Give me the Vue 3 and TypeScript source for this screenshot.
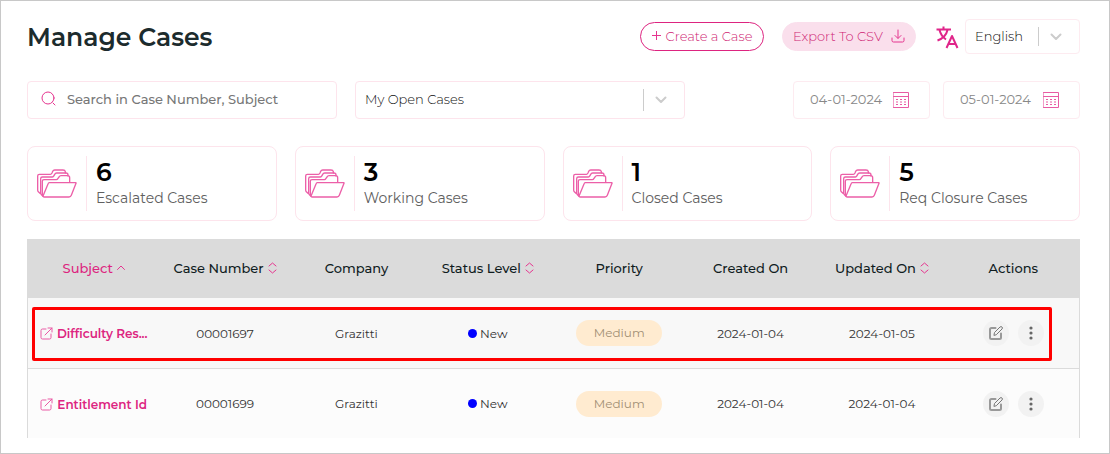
<script setup lang="ts">
import { ref } from 'vue'

interface Column { label: string; sort?: 'asc' | 'both' }
interface CaseRow {
  subject: string
  number: string
  company: string
  status: string
  priority: string
  created: string
  updated: string
  selected?: boolean
}

const search = ref('')
const view = ref('My Open Cases')
const language = ref('English')
const fromDate = ref('04-01-2024')
const toDate = ref('05-01-2024')

const stats = [
  { count: 6, label: 'Escalated Cases' },
  { count: 3, label: 'Working Cases' },
  { count: 1, label: 'Closed Cases' },
  { count: 5, label: 'Req Closure Cases' },
]

const columns: Column[] = [
  { label: 'Subject', sort: 'asc' },
  { label: 'Case Number', sort: 'both' },
  { label: 'Company' },
  { label: 'Status Level', sort: 'both' },
  { label: 'Priority' },
  { label: 'Created On' },
  { label: 'Updated On', sort: 'both' },
  { label: 'Actions' },
]

const rows: CaseRow[] = [
  { subject: 'Difficulty Res...', number: '00001697', company: 'Grazitti', status: 'New', priority: 'Medium', created: '2024-01-04', updated: '2024-01-05', selected: true },
  { subject: 'Entitlement Id', number: '00001699', company: 'Grazitti', status: 'New', priority: 'Medium', created: '2024-01-04', updated: '2024-01-04' },
]
</script>

<template>
  <main class="page">
    <header class="top">
      <h1>Manage Cases</h1>
      <button type="button" class="pill create">
        <svg width="9" height="9" viewBox="0 0 9 9" aria-hidden="true"><path d="M4.500 0v9M0 4.500h9" /></svg>
        Create a Case
      </button>
      <button type="button" class="pill export">
        Export To CSV
        <svg width="14" height="14" viewBox="0 0 14 14" aria-hidden="true"><path d="M7 1v8M4 6.500l3 3 3-3M1 9v2.500q0 1.500 1.500 1.500h9q1.500 0 1.500-1.500V9" /></svg>
      </button>
      <div class="language">
        <svg class="translate" width="24" height="24" viewBox="0 0 24 24" aria-hidden="true">
          <path d="M1.500 4.500H16M8.500 1.500v3M4.500 5c1 4 3.500 7.500 6.500 9.500M12.500 5c-1 4.500-4.500 8.500-10 10.500M11.500 23 17 11l5.500 12M13.500 19h7" />
        </svg>
        <div class="select">
          <select v-model="language" aria-label="Language"><option>English</option></select>
          <span class="caret"><svg width="12" height="8" viewBox="0 0 12 8" aria-hidden="true"><path d="M1.500 1.500 6 6l4.500-4.500" /></svg></span>
        </div>
      </div>
    </header>

    <section class="filters">
      <label class="search">
        <svg width="16" height="16" viewBox="0 0 16 16" aria-hidden="true"><circle cx="8" cy="7" r="6" /><path d="m13 12 2 2" /></svg>
        <input v-model="search" type="text" placeholder="Search in Case Number, Subject" aria-label="Search cases">
      </label>
      <div class="select view">
        <select v-model="view" aria-label="Case view"><option>My Open Cases</option></select>
        <span class="caret"><svg width="12" height="8" viewBox="0 0 12 8" aria-hidden="true"><path d="M1.500 1.500 6 6l4.500-4.500" /></svg></span>
      </div>
      <div class="dates">
        <label class="date">
          <input v-model="fromDate" type="text" aria-label="From date">
          <svg width="16" height="16" viewBox="0 0 16 16" aria-hidden="true"><path d="M.5.5h15v15H.5zM.5 4.500h15" /><path class="dots" d="M3 7.500h10M3 10h10M3 12.500h10" /></svg>
        </label>
        <label class="date">
          <input v-model="toDate" type="text" aria-label="To date">
          <svg width="16" height="16" viewBox="0 0 16 16" aria-hidden="true"><path d="M.5.5h15v15H.5zM.5 4.500h15" /><path class="dots" d="M3 7.500h10M3 10h10M3 12.500h10" /></svg>
        </label>
      </div>
    </section>

    <section class="stats">
      <article v-for="s in stats" :key="s.label" class="stat">
        <div class="folder">
          <svg width="40" height="29" viewBox="0 0 120 87" aria-hidden="true">
            <path d="M9 73 4 68q-2-2-2-5V21q0-5 5-5h33q3 0 5-4l2-5q2-4 6-4h25q6 0 7 5v4" />
            <path d="M14 78 11 74V29q0-5 5-5h30q3 0 5-4l2-4q2-4 6-4h28q6 0 6 6v3" />
            <path d="M18 82q-2 0-2-5V37q0-5 5-5h37q3 0 5-4l3-4q2-4 6-4h20q6 0 6 6v14" />
            <path d="M37 41h79q2 0 1 2l-14 36q-2 5-7 5H22q-5 0-3-5l14-34q1-4 4-4Z" />
          </svg>
        </div>
        <div>
          <strong>{{ s.count }}</strong>
          <p>{{ s.label }}</p>
        </div>
      </article>
    </section>

    <div class="table-wrap">
      <table>
        <thead>
          <tr>
            <th v-for="c in columns" :key="c.label" scope="col" :class="{ active: c.sort === 'asc' }">
              <button v-if="c.sort" type="button" class="sort">
                {{ c.label }}
                <svg v-if="c.sort === 'asc'" width="8" height="5" viewBox="0 0 8 5" aria-hidden="true"><path d="M.5 4.500 4 1l3.500 3.500" /></svg>
                <svg v-else width="9" height="12" viewBox="0 0 9 12" aria-hidden="true"><path d="M1 4 4.500 1 8 4M1 8l3.500 3L8 8" /></svg>
              </button>
              <template v-else>{{ c.label }}</template>
            </th>
          </tr>
        </thead>
        <tbody>
          <tr v-for="r in rows" :key="r.number" :class="{ selected: r.selected }">
            <td>
              <a href="#" class="subject">
                <svg width="13" height="13" viewBox="0 0 13 13" aria-hidden="true"><path d="M6 2H2.500Q1 2 1 3.500v7Q1 12 2.500 12h7q1.500 0 1.500-1.500V7M8 1h4v4M12 1 5 8" /></svg>
                {{ r.subject }}
              </a>
              <span v-if="r.selected" class="outline"></span>
            </td>
            <td>{{ r.number }}</td>
            <td>{{ r.company }}</td>
            <td><span class="status">{{ r.status }}</span></td>
            <td><span class="priority">{{ r.priority }}</span></td>
            <td>{{ r.created }}</td>
            <td>{{ r.updated }}</td>
            <td>
              <div class="actions">
                <button type="button" aria-label="Edit case">
                  <svg class="edit" width="14" height="14" viewBox="0 0 14 14" aria-hidden="true"><path d="M6.500 2H2.500Q1 2 1 3.500v8Q1 13 2.500 13h8q1.500 0 1.500-1.500v-4" /><path class="pen" d="m5 9 .5-2.500L11 1q1-.8 2 0t0 2L7.500 8.500Z" /></svg>
                </button>
                <button type="button" aria-label="More actions">
                  <svg class="more" width="4" height="14" viewBox="0 0 4 14" aria-hidden="true"><circle cx="2" cy="2" r="1.600" /><circle cx="2" cy="7" r="1.600" /><circle cx="2" cy="12" r="1.600" /></svg>
                </button>
              </div>
            </td>
          </tr>
        </tbody>
      </table>
    </div>
  </main>
</template>

<style>
body { margin: 0; background: #fff; }
</style>

<style scoped>
* { box-sizing: border-box; }
.page {
  min-height: 100vh;
  padding: 18px 29px 15px 26px;
  border: 1px solid #c8c8c8;
  font-family: Montserrat, Inter, "Liberation Sans", sans-serif;
  font-size: 12px;
  color: #333;
}
svg { flex: none; fill: none; stroke: #e5358f; stroke-width: 1; stroke-linecap: round; stroke-linejoin: round; }
button, input, select { margin: 0; font: inherit; color: inherit; }
button { cursor: pointer; }
h1, p { margin: 0; }

.top { display: flex; align-items: center; }
h1 { flex: 1; font-size: 25px; line-height: 34px; font-weight: 600; color: #1c2b2d; }
.pill {
  display: flex; align-items: center; height: 29px; padding: 0 10px 2px;
  border: 1px solid #dd2480; border-radius: 15px;
  background: #fff; color: #cf1f74; font-size: 13px; font-weight: 300; white-space: nowrap;
}
.create { gap: 5px; width: 124px; justify-content: center; padding: 0 0 2px; }
.export { width: 134px; justify-content: space-between; margin-left: 18px; border-color: #fadfec; background: #fadfec; }
.language { display: flex; align-items: center; gap: 6px; margin-left: 19px; }
.translate { stroke: #e0258a; stroke-width: 2; stroke-linecap: butt; }
.select { position: relative; width: 115px; height: 35px; }
.select select {
  width: 100%; height: 100%; padding: 0 50px 2px 9px; appearance: none;
  border: 1px solid #fdebf0; border-radius: 4px; background: #fff; color: #111; font-size: 13px; font-weight: 300;
}
.caret {
  position: absolute; top: 8px; right: 18px; bottom: 8px; display: flex; align-items: center;
  padding-left: 11px; border-left: 1px solid #ccc; pointer-events: none;
}
.caret svg { stroke: #ccc; stroke-width: 2; }

.filters { display: flex; gap: 18px; margin-top: 27px; }
.search {
  display: flex; align-items: center; gap: 11px; width: 310px; height: 38px; padding: 0 12px 2px;
  border: 1px solid #fde4ec; border-radius: 4px;
}
input { min-width: 0; padding: 0; border: 0; outline: 0; background: transparent; }
.search input { flex: 1; font-size: 13px; font-weight: 500; }
.search input::placeholder { color: #777; opacity: 1; }
.view { width: 330px; height: 38px; }
.view select { border-color: #fde4ec; }
.dates { display: flex; gap: 13px; margin-left: auto; }
.date {
  display: flex; align-items: center; justify-content: space-between; width: 137px; height: 38px; padding: 0 20px 0 16px;
  border: 1px solid #fdebf0; border-radius: 4px;
}
.date input { width: 80px; padding-bottom: 2px; font-size: 13px; color: #888; }
.date svg { stroke: #e85ba3; }
.dots { stroke-dasharray: 2 2; stroke-linecap: butt; }

.stats { display: grid; grid-template-columns: repeat(4, 1fr); gap: 18px; margin-top: 27px; }
.stat { display: flex; align-items: center; gap: 9px; height: 75px; padding: 0 9px; border: 1px solid #fde4ec; border-radius: 8px; }
.folder { display: flex; align-items: center; height: 55px; padding-right: 9px; border-right: 1px solid #fde4ec; }
.folder svg { stroke: #ec5fa8; stroke-width: 4; }
.stat strong { display: block; font-size: 25px; line-height: 28px; font-weight: 600; color: #000; }
.stat p { font-size: 14px; line-height: 24px; font-weight: 400; color: #606060; }

.table-wrap { margin-top: 18px; border: solid #dbdbdb; border-width: 0 1px; }
table { width: 100%; table-layout: fixed; border-spacing: 0; }
th { height: 59px; padding: 0 0 2px; background: #dbdbdb; color: #101c1e; font-size: 13px; font-weight: 500; }
.sort { display: inline-flex; align-items: center; gap: 4px; padding: 0; border: 0; background: none; white-space: nowrap; }
.active { color: #dd2480; }
td { height: 69px; padding: 0; text-align: center; font-size: 12px; font-weight: 400; color: #333; }
tbody tr { position: relative; background: #fcfcfc; }
tbody tr.selected { background: #f8f8f8; }
tbody tr.selected td { height: 71px; border-bottom: 1px solid #dbdbdb; }
.outline { position: absolute; inset: 9px 27px 8px 4px; border: 3px solid #f00; border-radius: 2px; pointer-events: none; }
.subject { display: inline-flex; align-items: center; gap: 4px; vertical-align: middle; color: #dd2480; font-weight: 600; text-decoration: none; white-space: nowrap; }
.subject svg { stroke: #ea5aa5; }
.status { display: inline-flex; align-items: center; gap: 3px; }
.status::before { content: ""; width: 9px; height: 9px; border-radius: 50%; background: #00f; }
.priority { display: inline-block; width: 86px; line-height: 26px; border-radius: 13px; background: #ffebd0; color: #a28f75; }
.actions { display: flex; justify-content: center; gap: 9px; }
.actions button { display: flex; align-items: center; justify-content: center; width: 26px; height: 26px; padding: 0; border: 0; border-radius: 50%; background: #f2f2f2; }
.actions .edit { stroke: #999; stroke-width: 2; }
.actions .pen { stroke: #777; stroke-width: 1; fill: #f2f2f2; }
.actions .more { fill: #666; stroke: none; }
</style>
